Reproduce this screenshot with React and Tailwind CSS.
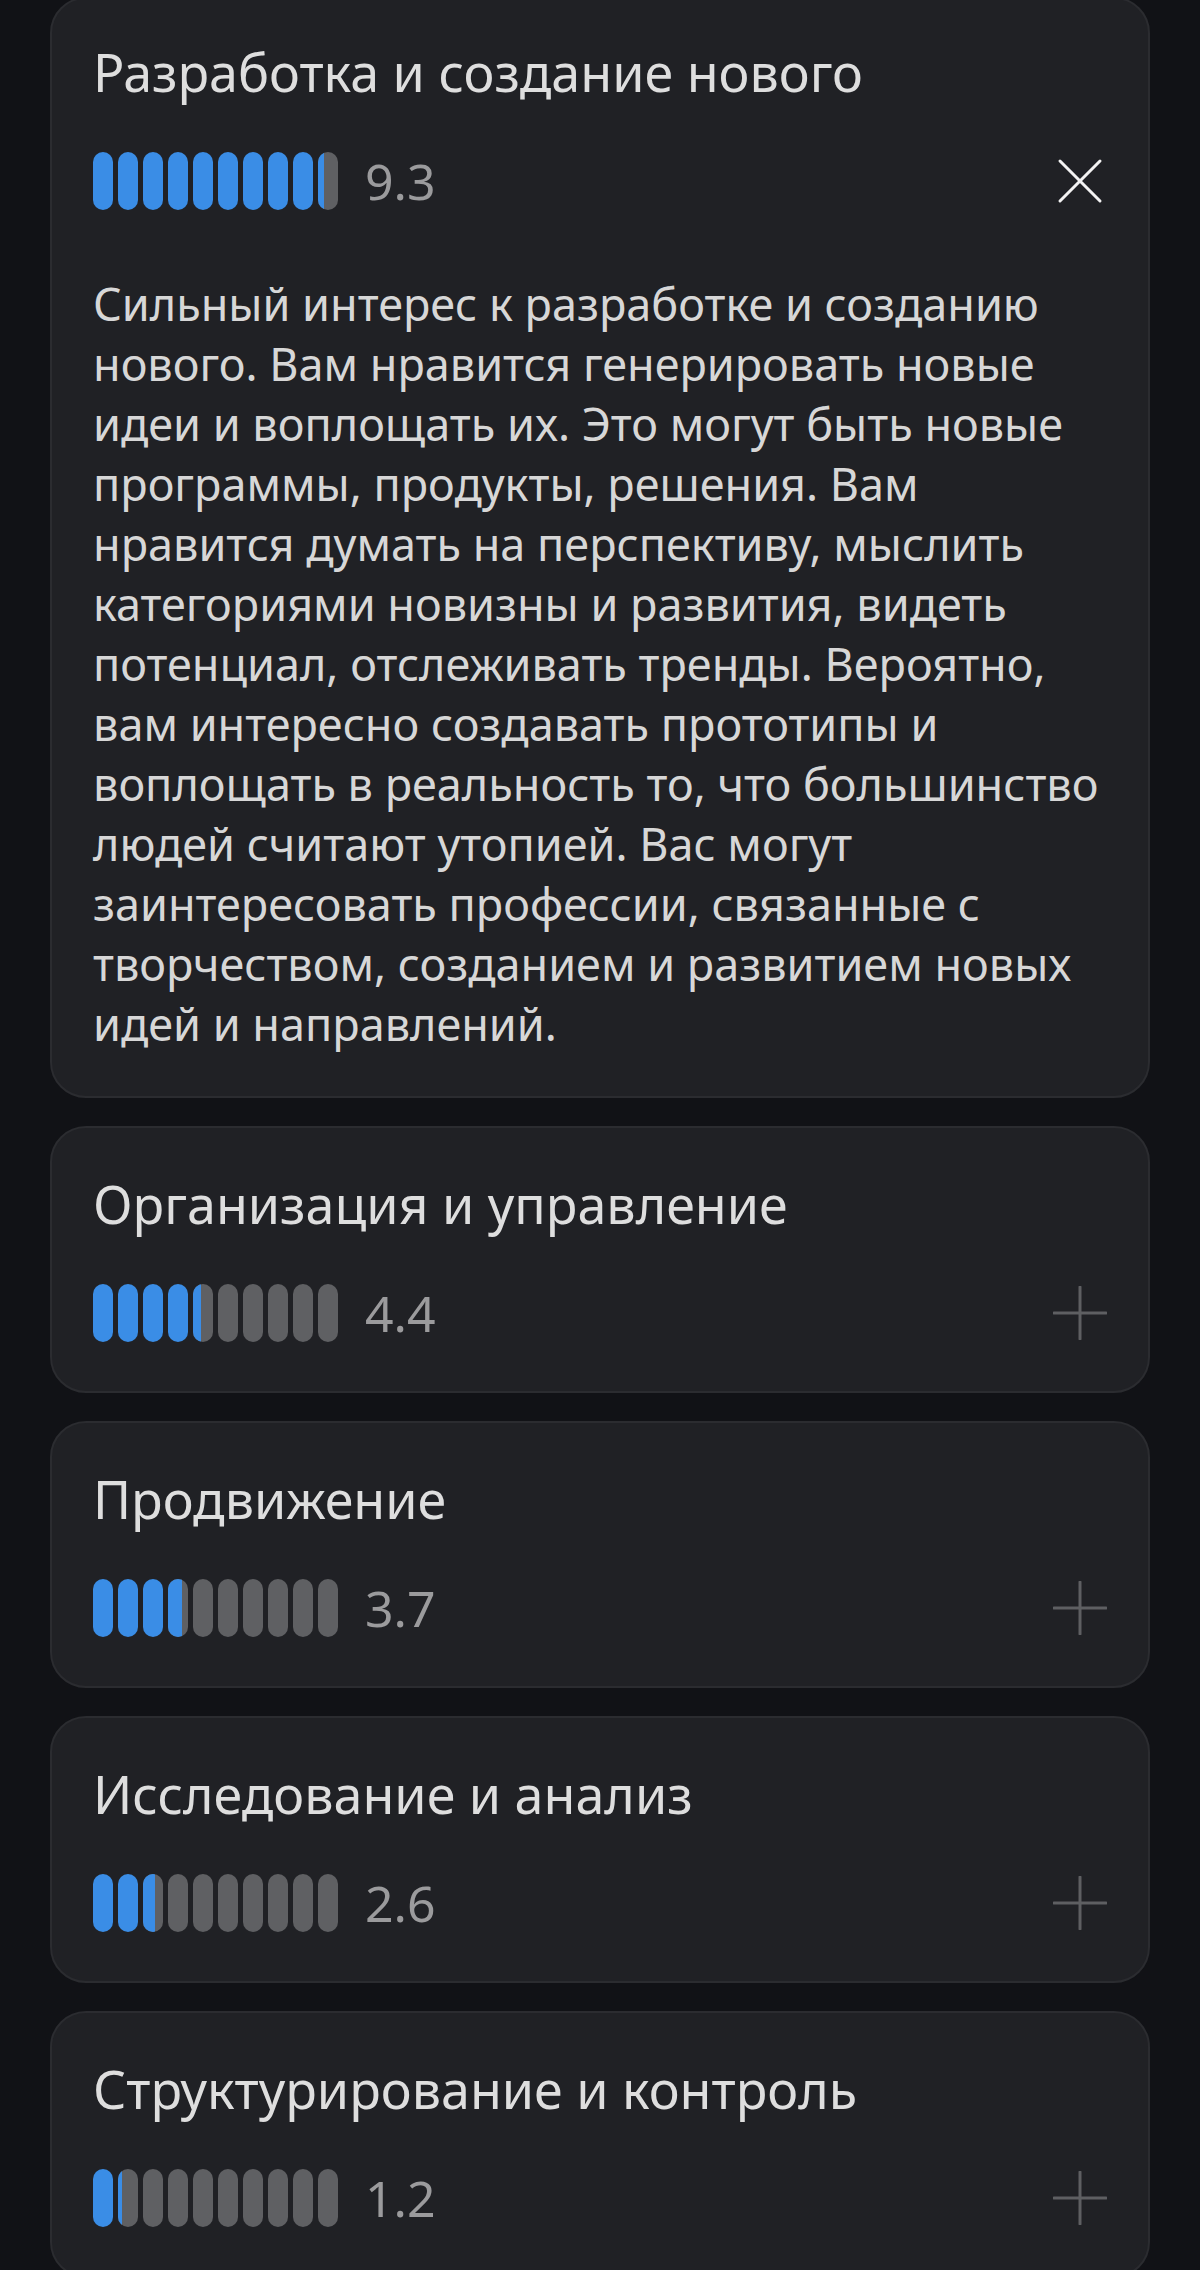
import React from "react";

const items = [
  {
    title: "Разработка и создание нового",
    value: 9.3,
    open: true,
    text:
      "Сильный интерес к разработке и созданию нового. Вам нравится генерировать новые идеи и воплощать их. Это могут быть новые программы, продукты, решения. Вам нравится думать на перспективу, мыслить категориями новизны и развития, видеть потенциал, отслеживать тренды. Вероятно, вам интересно создавать прототипы и воплощать в реальность то, что большинство людей считают утопией. Вас могут заинтересовать профессии, связанные с творчеством, созданием и развитием новых идей и направлений.",
  },
  { title: "Организация и управление", value: 4.4 },
  { title: "Продвижение", value: 3.7 },
  { title: "Исследование и анализ", value: 2.6 },
  { title: "Структурирование и контроль", value: 1.2 },
];

function Bars({ value }) {
  return (
    <div className="flex gap-[5px]">
      {Array.from({ length: 10 }).map((_, i) => {
        const f = Math.max(0, Math.min(1, value - i));
        return (
          <div
            key={i}
            className="h-[58px] w-[20px] overflow-hidden rounded-full bg-[#5f6063]"
          >
            <div
              className="h-full bg-[#3a8de6]"
              style={{ width: `${f * 100}%` }}
            />
          </div>
        );
      })}
    </div>
  );
}

function CloseIcon() {
  return (
    <svg width="54" height="54" viewBox="0 0 54 54" fill="none">
      <path
        d="M7 7L47 47M47 7L7 47"
        stroke="#f2f2f2"
        strokeWidth="3"
        strokeLinecap="round"
      />
    </svg>
  );
}

function PlusIcon() {
  return (
    <svg width="54" height="54" viewBox="0 0 54 54" fill="none">
      <path
        d="M27 1V53M1 27H53"
        stroke="#5e5f62"
        strokeWidth="3"
        strokeLinecap="round"
      />
    </svg>
  );
}

function Card({ item, first }) {
  return (
    <div
      className={`rounded-[36px] border-2 border-[#2b2c30] bg-[#202125] px-[41px] ${
        item.open ? "pt-[41px] pb-[42px]" : "pt-[44px] pb-[49px]"
      } ${first ? "-mt-[3px]" : ""}`}
    >
      <div className="text-[52px] leading-[64px] text-[#dedede]">
        {item.title}
      </div>
      <div className="mt-[48px] flex items-center justify-between">
        <div className="flex items-center gap-[27px]">
          <Bars value={item.value} />
          <span className="text-[50px] leading-[58px] text-[#9b9b9d]">
            {item.value.toFixed(1)}
          </span>
        </div>
        {item.open ? <CloseIcon /> : <PlusIcon />}
      </div>
      {item.open && (
        <p className="mt-[64px] text-[45px] leading-[60px] text-[#d7d7d7]">
          {item.text}
        </p>
      )}
    </div>
  );
}

export default function App() {
  return (
    <div
      className="min-h-[2270px] overflow-hidden bg-[#111216] px-[50px]"
      style={{ fontFamily: '"Noto Sans", "Open Sans", sans-serif' }}
    >
      <div className="flex flex-col gap-[28px]">
        {items.map((it, i) => (
          <Card key={i} item={it} first={i === 0} />
        ))}
      </div>
    </div>
  );
}
